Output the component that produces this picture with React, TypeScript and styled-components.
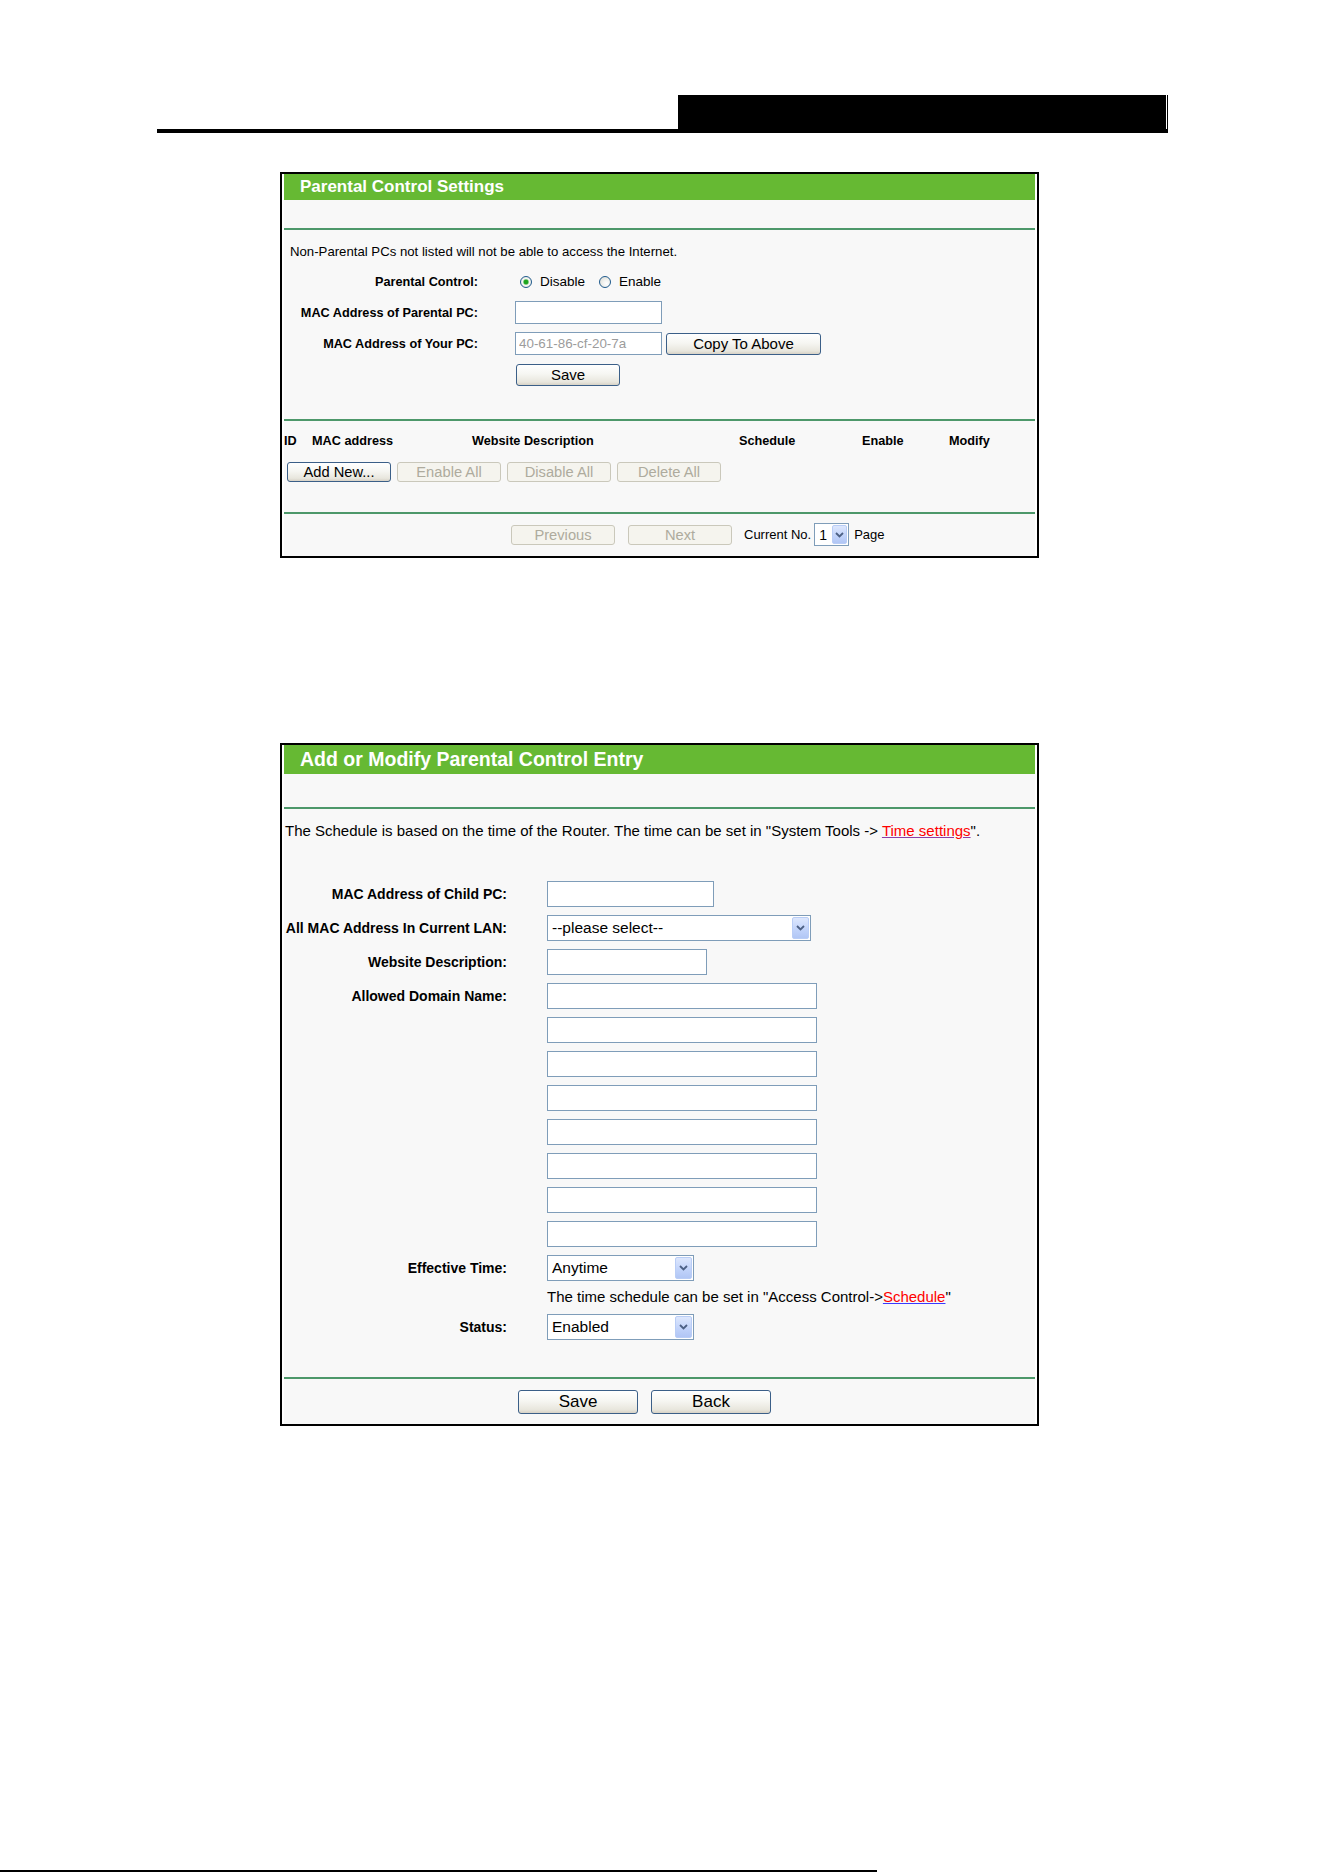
import React from 'react';
import styled, { createGlobalStyle } from 'styled-components';

const GlobalStyle = createGlobalStyle`
  html, body {
    margin: 0;
    padding: 0;
    background: #fff;
  }
  body {
    font-family: "Liberation Sans", Arial, sans-serif;
    color: #000;
  }
`;

const Page = styled.div`
  width: 1324px;
  height: 1872px;
  display: flex;
  flex-direction: column;
  overflow: hidden;
`;

// manual page header: black tab sitting on a heavy rule
const HeaderBar = styled.div`
  box-sizing: border-box;
  width: 1011px;
  margin: 95px 0 0 157px;
  padding-right: 1px;
  display: flex;
  justify-content: flex-end;
`;

const HeaderTab = styled.div`
  width: 489px;
  height: 34px;
  box-sizing: border-box;
  background: #000;
  border-right: 1px solid #fff;
  box-shadow: 1px 0 0 #000;
`;

const HeaderRule = styled.div`
  width: 1011px;
  height: 4px;
  margin-left: 157px;
  background: #000;
`;

const Panel = styled.section<{ $top: number }>`
  box-sizing: border-box;
  width: 759px;
  margin: ${p => p.$top}px 0 0 280px;
  border: 2px solid #000;
  padding: 0 2px;
  background: #fff;
`;

const Frame = styled.div`
  background: #f8f8f8;
`;

const TitleBar = styled.div<{ $large?: boolean }>`
  height: ${p => (p.$large ? 29 : 26)}px;
  margin-bottom: ${p => (p.$large ? 33 : 28)}px;
  padding-left: 16px;
  display: flex;
  align-items: center;
  background: #66b933;
  color: #fff;
  font-weight: bold;
  font-size: ${p => (p.$large ? 19.5 : 17)}px;
  white-space: nowrap;
`;

const Divider = styled.div`
  height: 2px;
  background: #4d986a;
`;

const Section = styled.div<{ $pad: string }>`
  padding: ${p => p.$pad};
`;

const Note = styled.div<{ $fs: number; $after?: number }>`
  font-size: ${p => p.$fs}px;
  line-height: 20px;
  margin-bottom: ${p => p.$after ?? 0}px;
  white-space: nowrap;
`;

const FieldRow = styled.div<{ $h: number }>`
  height: ${p => p.$h}px;
  display: flex;
  align-items: center;
`;

const Label = styled.div<{ $w: number; $gap: number; $fs: number }>`
  flex-shrink: 0;
  width: ${p => p.$w}px;
  margin-right: ${p => p.$gap}px;
  text-align: right;
  font-weight: bold;
  font-size: ${p => p.$fs}px;
  white-space: nowrap;
`;

const TextInput = styled.input<{ $w: number; $h: number; $fs: number; $muted?: boolean }>`
  box-sizing: border-box;
  width: ${p => p.$w}px;
  height: ${p => p.$h}px;
  margin: 0;
  padding: 0 3px;
  border: 1px solid #7f9db9;
  background: #fff;
  font-family: inherit;
  font-size: ${p => p.$fs}px;
  color: ${p => (p.$muted ? '#9c9c9c' : '#000')};
  outline: none;
`;

const XpButton = styled.button<{ $w: number; $h: number; $fs: number; $left?: number }>`
  box-sizing: border-box;
  width: ${p => p.$w}px;
  height: ${p => p.$h}px;
  margin: 0 0 0 ${p => p.$left ?? 0}px;
  padding: 0;
  border: 1px solid #3b5f88;
  border-radius: 3px;
  background: linear-gradient(#ffffff 0%, #f6f6f2 45%, #e8e6dd 85%, #d7d2c6 100%);
  font-family: inherit;
  font-size: ${p => p.$fs}px;
  color: #000;
  white-space: nowrap;

  &:disabled {
    border-color: #cac8bb;
    background: #f5f4ee;
    color: #aeab9d;
  }
`;

const RadioGroup = styled.div`
  display: flex;
  align-items: center;
  padding-left: 5px;
  font-size: 13.5px;
`;

const RadioDot = styled.span<{ $checked?: boolean }>`
  box-sizing: border-box;
  width: 12px;
  height: 12px;
  margin-right: 8px;
  border-radius: 50%;
  border: 1px solid #1f5a8c;
  background: ${p =>
    p.$checked
      ? 'radial-gradient(circle, #1ea51e 0 2px, #8fd08f 2.6px, #f7f7f4 3.4px, #dcdcd6 100%)'
      : 'radial-gradient(circle at 65% 65%, #ffffff 0, #f2f2ee 40%, #d8d8d2 100%)'};
`;

const RadioText = styled.span<{ $gap?: number }>`
  margin-right: ${p => p.$gap ?? 0}px;
`;

const TableHead = styled.div`
  height: 20px;
  display: grid;
  grid-template-columns: 28px 160px 267px 123px 87px auto;
  align-items: center;
  font-weight: bold;
  font-size: 12.7px;
  white-space: nowrap;
`;

const ButtonRow = styled.div<{ $pad: string; $gap: number }>`
  padding: ${p => p.$pad};
  display: flex;
  align-items: center;
  gap: ${p => p.$gap}px;
`;

const Pager = styled.div`
  height: 23px;
  padding: 9px 0 10px 227px;
  display: flex;
  align-items: center;
  font-size: 13px;
  white-space: nowrap;
`;

const PagerText = styled.span<{ $left: number }>`
  margin-left: ${p => p.$left}px;
`;

const SelectBox = styled.div<{ $w: number; $h: number; $fs: number; $left?: number }>`
  box-sizing: border-box;
  width: ${p => p.$w}px;
  height: ${p => p.$h}px;
  margin-left: ${p => p.$left ?? 0}px;
  border: 1px solid #7f9db9;
  background: #fff;
  display: flex;
  font-size: ${p => p.$fs}px;
`;

const SelectValue = styled.span`
  flex: 1;
  min-width: 0;
  padding-left: 4px;
  display: flex;
  align-items: center;
  white-space: nowrap;
  overflow: hidden;
`;

const ArrowBox = styled.span<{ $w: number }>`
  box-sizing: border-box;
  width: ${p => p.$w}px;
  margin: 1px;
  border: 1px solid #b9cdf6;
  border-radius: 2px;
  background: linear-gradient(#dde7fd, #c0d2fa 60%, #b1c6f5);
  display: flex;
  align-items: center;
  justify-content: center;
`;

const RedLink = styled.a<{ $line: string }>`
  color: #ff0000;
  text-decoration: underline;
  text-decoration-color: ${p => p.$line};
`;

const FooterRule = styled.div`
  margin-top: auto;
  width: 877px;
  height: 2px;
  background: #000;
`;

const Chevron = () => (
  <svg width="9" height="6" viewBox="0 0 9 6">
    <path d="M1 1 L4.5 4.5 L8 1" fill="none" stroke="#4d6185" strokeWidth="1.8" />
  </svg>
);

type SelectProps = { value: string; w: number; h: number; fs: number; arrow: number; left?: number };

const Select: React.FC<SelectProps> = ({ value, w, h, fs, arrow, left }) => (
  <SelectBox $w={w} $h={h} $fs={fs} $left={left}>
    <SelectValue>{value}</SelectValue>
    <ArrowBox $w={arrow}>
      <Chevron />
    </ArrowBox>
  </SelectBox>
);

const domainSlots = [0, 1, 2, 3, 4, 5, 6, 7];

const App: React.FC = () => {
  return (
    <Page>
      <GlobalStyle />
      <HeaderBar>
        <HeaderTab />
      </HeaderBar>
      <HeaderRule />

      <Panel $top={39}>
        <Frame>
          <TitleBar>Parental Control Settings</TitleBar>
          <Divider />
          <Section $pad="12px 0 29px 6px">
            <Note $fs={13.2} $after={4}>
              Non-Parental PCs not listed will not be able to access the Internet.
            </Note>
            <FieldRow $h={31}>
              <Label $w={188} $gap={37} $fs={12.7}>Parental Control:</Label>
              <RadioGroup>
                <RadioDot $checked />
                <RadioText $gap={14}>Disable</RadioText>
                <RadioDot />
                <RadioText>Enable</RadioText>
              </RadioGroup>
            </FieldRow>
            <FieldRow $h={31}>
              <Label $w={188} $gap={37} $fs={12.7}>MAC Address of Parental PC:</Label>
              <TextInput $w={147} $h={23} $fs={13.4} defaultValue="" />
            </FieldRow>
            <FieldRow $h={31}>
              <Label $w={188} $gap={37} $fs={12.7}>MAC Address of Your PC:</Label>
              <TextInput $w={147} $h={23} $fs={13.4} $muted readOnly defaultValue="40-61-86-cf-20-7a" />
              <XpButton $w={155} $h={22} $fs={15} $left={4}>Copy To Above</XpButton>
            </FieldRow>
            <FieldRow $h={31}>
              <Label $w={188} $gap={37} $fs={12.7} />
              <XpButton $w={104} $h={22} $fs={15} $left={1}>Save</XpButton>
            </FieldRow>
          </Section>
          <Divider />
          <Section $pad="10px 0 30px 0">
            <TableHead>
              <span>ID</span>
              <span>MAC address</span>
              <span>Website Description</span>
              <span>Schedule</span>
              <span>Enable</span>
              <span>Modify</span>
            </TableHead>
            <ButtonRow $pad="11px 0 0 3px" $gap={6}>
              <XpButton $w={104} $h={20} $fs={14.7}>Add New...</XpButton>
              <XpButton $w={104} $h={20} $fs={14.7} disabled>Enable All</XpButton>
              <XpButton $w={104} $h={20} $fs={14.7} disabled>Disable All</XpButton>
              <XpButton $w={104} $h={20} $fs={14.7} disabled>Delete All</XpButton>
            </ButtonRow>
          </Section>
          <Divider />
          <Pager>
            <XpButton $w={104} $h={20} $fs={14.7} disabled>Previous</XpButton>
            <XpButton $w={104} $h={20} $fs={14.7} $left={13} disabled>Next</XpButton>
            <PagerText $left={12}>Current No.</PagerText>
            <Select value="1" w={35} h={23} fs={14} arrow={15} left={3} />
            <PagerText $left={5}>Page</PagerText>
          </Pager>
        </Frame>
      </Panel>

      <Panel $top={185}>
        <Frame>
          <TitleBar $large>Add or Modify Parental Control Entry</TitleBar>
          <Divider />
          <Section $pad="12px 0 32px 1px">
            <Note $fs={15} $after={36}>
              The Schedule is based on the time of the Router. The time can be set in "System Tools -&gt;{' '}
              <RedLink href="#" $line="#8a3fa8">Time settings</RedLink>".
            </Note>
            <FieldRow $h={34}>
              <Label $w={222} $gap={40} $fs={14}>MAC Address of Child PC:</Label>
              <TextInput $w={167} $h={26} $fs={15} defaultValue="" />
            </FieldRow>
            <FieldRow $h={34}>
              <Label $w={222} $gap={40} $fs={14}>All MAC Address In Current LAN:</Label>
              <Select value="--please select--" w={264} h={26} fs={15.5} arrow={17} />
            </FieldRow>
            <FieldRow $h={34}>
              <Label $w={222} $gap={40} $fs={14}>Website Description:</Label>
              <TextInput $w={160} $h={26} $fs={15} defaultValue="" />
            </FieldRow>
            {domainSlots.map(slot => (
              <FieldRow $h={34} key={slot}>
                <Label $w={222} $gap={40} $fs={14}>{slot === 0 ? 'Allowed Domain Name:' : ''}</Label>
                <TextInput $w={270} $h={26} $fs={15} defaultValue="" />
              </FieldRow>
            ))}
            <FieldRow $h={34}>
              <Label $w={222} $gap={40} $fs={14}>Effective Time:</Label>
              <Select value="Anytime" w={147} h={26} fs={15.5} arrow={17} />
            </FieldRow>
            <FieldRow $h={24}>
              <Label $w={222} $gap={40} $fs={14} />
              <Note $fs={15}>
                The time schedule can be set in "Access Control-&gt;
                <RedLink href="#" $line="#3a3aff">Schedule</RedLink>"
              </Note>
            </FieldRow>
            <FieldRow $h={36}>
              <Label $w={222} $gap={40} $fs={14}>Status:</Label>
              <Select value="Enabled" w={147} h={26} fs={15.5} arrow={17} />
            </FieldRow>
          </Section>
          <Divider />
          <ButtonRow $pad="11px 0 10px 234px" $gap={13}>
            <XpButton $w={120} $h={24} $fs={17}>Save</XpButton>
            <XpButton $w={120} $h={24} $fs={17}>Back</XpButton>
          </ButtonRow>
        </Frame>
      </Panel>

      <FooterRule />
    </Page>
  );
};

export default App;
